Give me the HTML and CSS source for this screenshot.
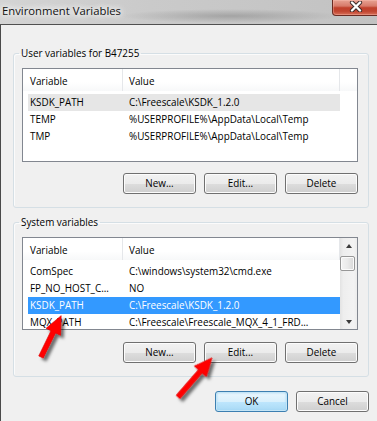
FILE: index.html
```html
<!DOCTYPE html>
<html>
<head>
<meta charset="utf-8">
<link rel="stylesheet" href="styles.css">
</head>
<body>
<div class="window">
  <div class="titlebar">
    <span class="title">Environment Variables</span>
    <div class="close">
      <svg width="14" height="11" viewBox="0 0 14 11">
        <path d="M3 1.5 L11 9.5 M11 1.5 L3 9.5" stroke="#3a2a28" stroke-width="4.2" stroke-linecap="round"/>
        <path d="M3 1.5 L11 9.5 M11 1.5 L3 9.5" stroke="#ffffff" stroke-width="2.4" stroke-linecap="round"/>
      </svg>
    </div>
  </div>
  <div class="content">
    <fieldset class="group user">
      <legend>User variables for B47255</legend>
      <div class="list">
        <div class="list-main">
          <div class="header">
            <div class="hcell c1">Variable</div>
            <div class="hcell c2">Value</div>
          </div>
          <div class="rows">
            <div class="row inactive"><span class="c1">KSDK_PATH</span><span class="c2">C:\Freescale\KSDK_1.2.0</span></div>
            <div class="row"><span class="c1">TEMP</span><span class="c2">%USERPROFILE%\AppData\Local\Temp</span></div>
            <div class="row"><span class="c1">TMP</span><span class="c2">%USERPROFILE%\AppData\Local\Temp</span></div>
          </div>
        </div>
      </div>
      <div class="buttons">
        <button class="btn">New...</button>
        <button class="btn">Edit...</button>
        <button class="btn">Delete</button>
      </div>
    </fieldset>
    <fieldset class="group system">
      <legend>System variables</legend>
      <div class="list">
        <div class="list-main">
          <div class="header">
            <div class="hcell c1">Variable</div>
            <div class="hcell c2">Value</div>
          </div>
          <div class="rows">
            <div class="row"><span class="c1">ComSpec</span><span class="c2">C:\windows\system32\cmd.exe</span></div>
            <div class="row"><span class="c1">FP_NO_HOST_C...</span><span class="c2">NO</span></div>
            <div class="row selected"><span class="c1">KSDK_PATH</span><span class="c2">C:\Freescale\KSDK_1.2.0</span></div>
            <div class="row"><span class="c1">MQX_PATH</span><span class="c2">C:\Freescale\Freescale_MQX_4_1_FRD...</span></div>
          </div>
        </div>
        <div class="scrollbar">
          <div class="sb-btn"><span class="tri up"></span></div>
          <div class="sb-track"><div class="sb-thumb"></div></div>
          <div class="sb-btn"><span class="tri down"></span></div>
        </div>
      </div>
      <div class="buttons">
        <button class="btn">New...</button>
        <button class="btn">Edit...</button>
        <button class="btn">Delete</button>
      </div>
    </fieldset>
    <div class="buttons dialog-buttons">
      <button class="btn default">OK</button>
      <button class="btn">Cancel</button>
    </div>
  </div>
  <svg class="arrows" width="377" height="421" viewBox="0 0 377 421">
    <defs>
      <filter id="shadow" x="-50%" y="-50%" width="200%" height="200%">
        <feDropShadow dx="3" dy="3" stdDeviation="1.8" flood-color="#000" flood-opacity="0.55"/>
      </filter>
    </defs>
    <g filter="url(#shadow)" fill="#ff0000" stroke="#e00000" stroke-width="0.6">
      <polygon transform="translate(41,357) rotate(-64)" points="0,-2.5 28,-2.5 28,-8 46,0 28,8 28,2.5 0,2.5"/>
      <polygon transform="translate(178,397) rotate(-49)" points="0,-2.5 34,-2.5 34,-8 52,0 34,8 34,2.5 0,2.5"/>
    </g>
  </svg>
</div>
</body>
</html>
```
FILE: styles.css
```css
html, body {
  margin: 0;
  padding: 0;
}
body {
  width: 377px;
  height: 421px;
  overflow: hidden;
  font-family: "Open Sans", "Noto Sans", sans-serif;
  font-size: 9.9px;
  color: #000;
  background: #f0f0f0;
}
.window {
  position: relative;
  width: 377px;
  height: 421px;
}
.titlebar {
  height: 24px;
  border-bottom: 1px solid #505050;
  display: flex;
  justify-content: space-between;
  align-items: flex-start;
  background:
    radial-gradient(ellipse 110px 7px at 230px 16px, rgba(120,120,120,0.45), rgba(120,120,120,0)),
    linear-gradient(to right, #d4d4d4 0%, #cacaca 40%, #c2c2c2 100%);
}
.title {
  padding: 3px 0 0 2px;
  font-size: 11.3px;
  line-height: 16px;
  color: #111;
  text-shadow: 0 0 5px #fff, 0 0 8px #fff, 0 0 10px #f4f4f4;
}
.close {
  width: 45px;
  height: 15px;
  margin-right: -2px;
  border: 1px solid #6a2b22;
  border-top: none;
  border-radius: 0 0 0 4px;
  display: flex;
  align-items: center;
  justify-content: center;
  background: linear-gradient(to bottom, #e7a292 0%, #d77b6a 40%, #c0402b 52%, #c14530 75%, #d8705a 100%);
  box-shadow: inset 0 0 0 1px rgba(255,200,190,0.35);
}
.close svg {
  display: block;
  margin-top: -2px;
}
.content {
  height: 396px;
  box-sizing: border-box;
  border-left: 1px solid #4a4a4a;
  padding: 20px 0 0 12px;
}
.group {
  margin: 0;
  padding: 7px 10px 13px 8px;
  width: 356px;
  min-width: 0;
  box-sizing: border-box;
  border: 1px solid #d5dfe5;
  border-radius: 3px;
  box-shadow: inset 1px 1px 0 #fbfbfb;
}
.group legend {
  padding: 0 2px;
  margin-left: -3px;
  line-height: 16px;
}
.group.system {
  margin-top: 6px;
}
.list {
  height: 94px;
  box-sizing: border-box;
  border: 1px solid #828790;
  background: #fff;
  display: flex;
}
.system .list {
  height: 93px;
}
.list-main {
  flex: 1;
  min-width: 0;
  display: flex;
  flex-direction: column;
}
.header {
  height: 22px;
  display: flex;
  background: linear-gradient(to bottom, #ffffff 0%, #ffffff 60%, #f7f8f9 100%);
}
.hcell {
  box-sizing: border-box;
  height: 22px;
  border-right: 1px solid #e5e7ea;
  padding-top: 2px;
  line-height: 20px;
}
.hcell.c1 {
  width: 100px;
  padding-left: 7px;
}
.hcell.c2 {
  width: 217px;
  padding-left: 6px;
}
.rows {
  padding: 3px 0 0 5px;
}
.row {
  width: 312px;
  height: 17px;
  line-height: 17px;
  box-sizing: border-box;
  padding-left: 2px;
  display: flex;
  white-space: nowrap;
}
.row .c1 {
  width: 99px;
  flex: none;
}
.row.inactive {
  background: #e6e6e6;
}
.row.selected {
  background: #3399ff;
  color: #fff;
}
.scrollbar {
  width: 17px;
  display: flex;
  flex-direction: column;
  background: linear-gradient(to right, #e3e3e3 0%, #eeeeee 20%, #f3f3f3 80%, #ececec 100%);
}
.sb-btn {
  height: 17px;
  display: flex;
  align-items: center;
  justify-content: center;
}
.tri {
  width: 0;
  height: 0;
  border-left: 3.5px solid transparent;
  border-right: 3.5px solid transparent;
}
.tri.up {
  border-bottom: 4px solid #3b3b3b;
  margin-top: -2px;
}
.tri.down {
  border-top: 4px solid #3b3b3b;
  margin-top: 2px;
}
.sb-track {
  flex: 1;
  padding: 1px 2px 0 0;
}
.sb-thumb {
  height: 15px;
  box-sizing: border-box;
  border: 1px solid #979797;
  border-radius: 2px;
  background: linear-gradient(to right, #f3f3f3 0%, #eaeaea 50%, #d8d8d8 100%);
  box-shadow: inset 0 0 0 1px #fbfbfb;
}
.buttons {
  display: flex;
  justify-content: flex-end;
  gap: 8px;
  margin-top: 11px;
}
.system .buttons {
  margin-top: 12px;
}
.dialog-buttons {
  width: 356px;
  margin-top: 14px;
}
.btn {
  width: 73px;
  height: 21px;
  margin: 0;
  padding: 0;
  box-sizing: border-box;
  border: 1px solid #707070;
  border-radius: 3px;
  font-family: "Open Sans", "Noto Sans", sans-serif;
  font-size: 9.9px;
  color: #000;
  line-height: 19px;
  background: linear-gradient(to bottom, #f2f2f2 0%, #ebebeb 50%, #dddddd 51%, #cfcfcf 100%);
  box-shadow: inset 0 0 0 1px #fcfcfc;
}
.btn.default {
  border-color: #3c7fb1;
  background: linear-gradient(to bottom, #eaf6fd 0%, #d9f0fc 50%, #bee6fd 51%, #a7d9f5 100%);
  box-shadow: inset 0 0 0 1px #c4e5f6, inset 0 0 2px 1px #9fd4f2;
}
.arrows {
  position: absolute;
  left: 0;
  top: 0;
  pointer-events: none;
}
```
